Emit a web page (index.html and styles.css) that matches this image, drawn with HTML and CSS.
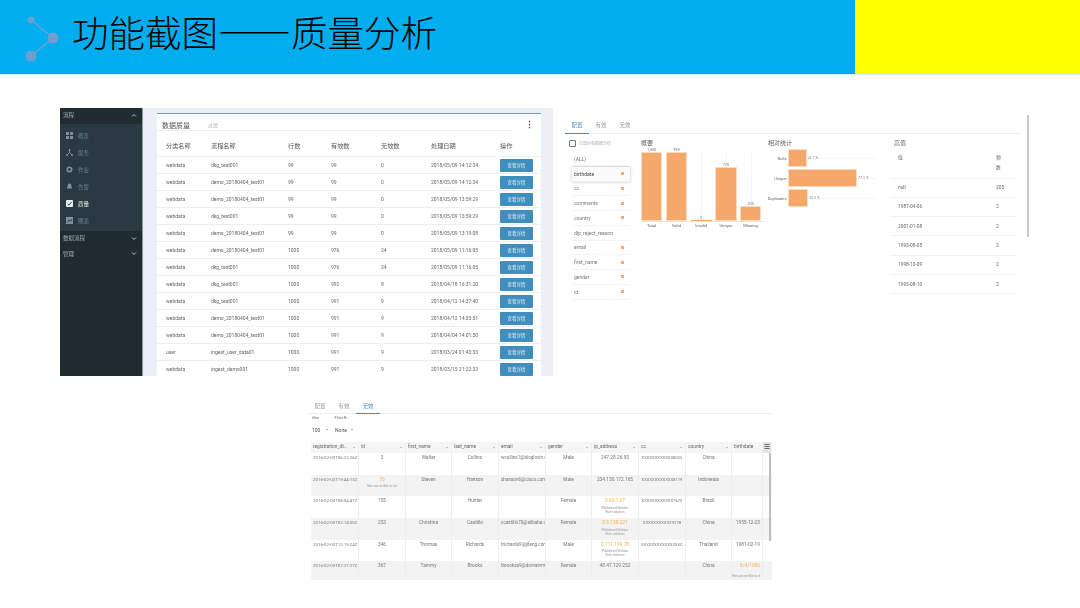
FILE: index.html

```html
<!DOCTYPE html>
<html lang="zh-CN">
<head>
  <meta charset="UTF-8" />
  <title>功能截图——质量分析</title>
  <link rel="stylesheet" href="styles.css">
</head>
<body>
  <div class="slide">
    <header class="banner">
      <div class="banner-main">
        <svg class="banner-logo" width="44" height="50" viewBox="0 0 44 50">
          <path d="M9 4 L31 22 L9 40" fill="none" stroke="#6f9fd0" stroke-width="1.6"/>
          <circle cx="9" cy="4" r="3.5" fill="#6f9fd0"/>
          <circle cx="31" cy="22" r="5.5" fill="#6f9fd0"/>
          <circle cx="9" cy="40" r="5.5" fill="#6f9fd0"/>
        </svg>
        <h1>功能截图——质量分析</h1>
      </div>
      <div class="banner-accent"></div>
    </header>

    <div class="shots-top">
      <section class="shot dq">
        <nav class="side">
          <div class="side-head">流程<svg width="6" height="5" viewBox="0 0 6 5"><path d="M1 3.5L3 1.5L5 3.5" fill="none" stroke="#b4c0c4"/></svg></div>
          <div class="side-items">
            <div class="side-item"><svg width="7" height="7" viewBox="0 0 7 7"><path d="M0 0h3v3H0zM4 0h3v3H4zM0 4h3v3H0zM4 4h3v3H4z" fill="#7f9097"/></svg>概览</div>
            <div class="side-item"><svg width="7" height="7" viewBox="0 0 7 7"><path d="M3.5 0.5v3M3.5 3.5L1 6M3.5 3.5L6 6" stroke="#7f9097" fill="none"/><circle cx="3.5" cy="1" r="1" fill="#7f9097"/><circle cx="1" cy="6" r="1" fill="#7f9097"/><circle cx="6" cy="6" r="1" fill="#7f9097"/></svg>服务</div>
            <div class="side-item"><svg width="7" height="7" viewBox="0 0 7 7"><circle cx="3.5" cy="3.5" r="2.2" fill="none" stroke="#7f9097" stroke-width="1.6"/></svg>作业</div>
            <div class="side-item"><svg width="7" height="7" viewBox="0 0 7 7"><path d="M3.5 0.5C2 0.5 1.5 2 1.5 3.5L0.8 5.5H6.2L5.5 3.5C5.5 2 5 0.5 3.5 0.5z" fill="#7f9097"/></svg>告警</div>
            <div class="side-item side-item-on"><svg width="7" height="7" viewBox="0 0 7 7"><rect width="7" height="7" rx="1" fill="#e8edef"/><path d="M1.5 4L3 5.2L5.5 2" stroke="#33454d" fill="none"/></svg>质量</div>
            <div class="side-item"><svg width="7" height="7" viewBox="0 0 7 7"><rect width="7" height="7" fill="#7f9097"/><path d="M1 5.5L3 3L4.5 4.5L6 2" stroke="#2b3a42" fill="none"/></svg>图表</div>
          </div>
          <div class="side-head">数据流程<svg width="6" height="5" viewBox="0 0 6 5"><path d="M1 1.5L3 3.5L5 1.5" fill="none" stroke="#b4c0c4"/></svg></div>
          <div class="side-head">管理<svg width="6" height="5" viewBox="0 0 6 5"><path d="M1 1.5L3 3.5L5 1.5" fill="none" stroke="#b4c0c4"/></svg></div>
        </nav>
        <div class="dq-main">
          <div class="card">
            <div class="card-top">
              <span class="card-title">数据质量</span>
              <span class="card-filter">过滤</span>
              <span class="kebab">⋮</span>
            </div>
            <div class="dq-row dq-head"><span>分类名称</span><span>流程名称</span><span>行数</span><span>有效数</span><span>无效数</span><span>处理日期</span><span>操作</span></div>
            <div class="dq-row"><span>webdata</span><span>dkg_test001</span><span>99</span><span>99</span><span>0</span><span>2018/05/09 14:12:34</span><button>查看详情</button></div>
            <div class="dq-row"><span>webdata</span><span>demo_20180404_test01</span><span>99</span><span>99</span><span>0</span><span>2018/05/09 14:12:34</span><button>查看详情</button></div>
            <div class="dq-row"><span>webdata</span><span>demo_20180404_test01</span><span>99</span><span>99</span><span>0</span><span>2018/05/09 13:59:29</span><button>查看详情</button></div>
            <div class="dq-row"><span>webdata</span><span>dkg_test001</span><span>99</span><span>99</span><span>0</span><span>2018/05/09 13:59:29</span><button>查看详情</button></div>
            <div class="dq-row"><span>webdata</span><span>demo_20180404_test01</span><span>99</span><span>99</span><span>0</span><span>2018/05/09 13:19:08</span><button>查看详情</button></div>
            <div class="dq-row"><span>webdata</span><span>demo_20180404_test01</span><span>1000</span><span>976</span><span>24</span><span>2018/05/09 11:16:05</span><button>查看详情</button></div>
            <div class="dq-row"><span>webdata</span><span>dkg_test001</span><span>1000</span><span>976</span><span>24</span><span>2018/05/09 11:16:05</span><button>查看详情</button></div>
            <div class="dq-row"><span>webdata</span><span>dkg_test001</span><span>1000</span><span>992</span><span>8</span><span>2018/04/18 16:31:20</span><button>查看详情</button></div>
            <div class="dq-row"><span>webdata</span><span>dkg_test001</span><span>1000</span><span>991</span><span>9</span><span>2018/04/12 14:37:40</span><button>查看详情</button></div>
            <div class="dq-row"><span>webdata</span><span>demo_20180404_test01</span><span>1000</span><span>991</span><span>9</span><span>2018/04/12 14:33:51</span><button>查看详情</button></div>
            <div class="dq-row"><span>webdata</span><span>demo_20180404_test01</span><span>1000</span><span>991</span><span>9</span><span>2018/04/04 14:01:50</span><button>查看详情</button></div>
            <div class="dq-row"><span>user</span><span>ingest_user_data01</span><span>1000</span><span>991</span><span>9</span><span>2018/03/24 01:43:33</span><button>查看详情</button></div>
            <div class="dq-row"><span>webdata</span><span>ingest_demo001</span><span>1000</span><span>991</span><span>9</span><span>2018/03/15 21:22:33</span><button>查看详情</button></div>
          </div>
        </div>
      </section>

      <section class="shot profile">
        <div class="tabs">
          <span class="tab tab-on">配置</span><span class="tab">有效</span><span class="tab">无效</span>
        </div>
        <div class="profile-body">
          <div class="fields">
            <div class="only-bad"><i class="checkbox"></i>只显示有数据分析</div>
            <div class="field">(ALL)</div>
            <div class="field field-on">birthdate<i class="dot"></i></div>
            <div class="field">cc<i class="dot"></i></div>
            <div class="field">comments<i class="dot"></i></div>
            <div class="field">country<i class="dot"></i></div>
            <div class="field">dlp_reject_reason</div>
            <div class="field">email<i class="dot"></i></div>
            <div class="field">first_name<i class="dot"></i></div>
            <div class="field">gender<i class="dot"></i></div>
            <div class="field">id<i class="dot"></i></div>
          </div>

          <div class="overview">
            <div class="sub-title">概要</div>
            <div class="plot">
              <div class="col"><span>1,000</span><i class="bar bar-full"></i></div>
              <div class="col"><span>998</span><i class="bar bar-full"></i></div>
              <div class="col"><span>2</span><i class="bar bar-tiny"></i></div>
              <div class="col"><span>770</span><i class="bar bar-unique"></i></div>
              <div class="col"><span>205</span><i class="bar bar-missing"></i></div>
            </div>
            <div class="plot-labels"><span>Total</span><span>Valid</span><span>Invalid</span><span>Unique</span><span>Missing</span></div>
          </div>

          <div class="relative">
            <div class="sub-title">相对统计</div>
            <div class="rel-row"><span class="rel-name">Nulls</span><div class="rel-track"><i class="hbar hbar-nulls"></i><span class="rel-pct">26.7 %</span></div></div>
            <div class="rel-row"><span class="rel-name">Unique</span><div class="rel-track"><i class="hbar hbar-unique"></i><span class="rel-pct">77.3 %</span></div></div>
            <div class="rel-row"><span class="rel-name">Duplicates</span><div class="rel-track"><i class="hbar hbar-dup"></i><span class="rel-pct">33.3 %</span></div></div>
          </div>

          <div class="freq">
            <div class="sub-title freq-title">高值</div>
            <div class="freq-row freq-head"><span>值</span><span>频<br>数</span></div>
            <div class="freq-row"><span>null</span><span>205</span></div>
            <div class="freq-row"><span>1987-04-06</span><span>2</span></div>
            <div class="freq-row"><span>2001-01-08</span><span>2</span></div>
            <div class="freq-row"><span>1993-08-05</span><span>2</span></div>
            <div class="freq-row"><span>1998-10-09</span><span>2</span></div>
            <div class="freq-row"><span>1993-08-10</span><span>2</span></div>
          </div>
        </div>
        <div class="thumb"></div>
      </section>
    </div>

    <section class="shot invalid">
      <div class="tabs">
        <span class="tab">配置</span><span class="tab">有效</span><span class="tab tab-on">无效</span>
      </div>
      <div class="dt-filters"><span>filter</span><span>Filter R...</span></div>
      <div class="dt-selects"><span>100</span><i class="caret"></i><span>None</span><i class="caret"></i></div>
      <div class="dt">
        <div class="dt-row dt-head">
          <span>registration_dt...</span><span>id</span><span>first_name</span><span>last_name</span><span>email</span><span>gender</span><span>ip_address</span><span>cc</span><span>country</span><span class="no-sort">birthdate</span><span class="dt-menu">≡</span>
        </div>
        <div class="dt-row">
          <span class="left">2016-02-03T06:22:26Z</span><span>2</span><span>Walter</span><span>Collins</span><span class="left">wcollins1@bloglovin.c</span><span>Male</span><span>247.28.26.93</span><span>XXXXXXXXXXXX8025</span><span>China</span><span></span><span></span>
        </div>
        <div class="dt-row dt-even">
          <span class="left">2016-02-03T19:44:13Z</span><span><b>7b</b><small>Not convertible to int</small></span><span>Steven</span><span>Hanson</span><span class="left">shanson6@cisco.com</span><span>Male</span><span>234.130.172.165</span><span>XXXXXXXXXXXX8119</span><span>Indonesia</span><span></span><span></span>
        </div>
        <div class="dt-row">
          <span class="left">2016-02-03T08:04:47Z</span><span>155</span><span></span><span>Hunter</span><span></span><span>Female</span><span><b>0.62.1.27</b><small>IPAddressValidator<br>Rule violation</small></span><span>XXXXXXXXXXXX7675</span><span>Brazil</span><span></span><span></span>
        </div>
        <div class="dt-row dt-even">
          <span class="left">2016-02-03T02:14:50Z</span><span>253</span><span>Christina</span><span>Castillo</span><span class="left">ccastillo70@alibaba.c</span><span>Female</span><span><b>0.9.138.221</b><small>IPAddressValidator<br>Rule violation</small></span><span>XXXXXXXXXXX9278</span><span>China</span><span class="right">1955-12-23</span><span></span>
        </div>
        <div class="dt-row">
          <span class="left">2016-02-03T12:19:24Z</span><span>346</span><span>Thomas</span><span>Richards</span><span class="left">trichards9@jifeng.com</span><span>Male</span><span><b>0.111.199.78</b><small>IPAddressValidator<br>Rule violation</small></span><span>XXXXXXXXXXXXXXUC</span><span>Thailand</span><span class="right">1981-02-19</span><span></span>
        </div>
        <div class="dt-row dt-even">
          <span class="left">2016-02-03T07:27:27Z</span><span>367</span><span>Tammy</span><span>Brooks</span><span class="left">tbrooksa9@domainm</span><span>Female</span><span>48.47.129.252</span><span></span><span>China</span><span class="right"><b>5/4/1986</b><small class="small-low">Not convertible to d</small></span><span></span>
        </div>
        <div class="dt-scroll"></div>
      </div>
    </section>
  </div>
</body>
</html>
```

FILE: styles.css

```css
* {
  box-sizing: border-box;
}
html, body {
  margin: 0;
  padding: 0;
  background: #ffffff;
}
.slide {
  width: 1080px;
  height: 608px;
  overflow: hidden;
  background: #ffffff;
  font-family: Roboto, "Noto Sans CJK SC", sans-serif;
}

/* banner */
.banner {
  display: flex;
  height: 74px;
  box-shadow: 0 1px 0 #cdeefb;
}
.banner-main {
  flex: 1;
  display: flex;
  align-items: center;
  padding-left: 22px;
  background: #00aeef;
}
.banner-logo {
  flex: none;
  margin-top: 8px;
}
.banner-main h1 {
  margin: 0 0 10px 6px;
  font-family: "Noto Sans CJK SC", sans-serif;
  font-size: 36.5px;
  font-weight: 300;
  line-height: 1;
  color: #000000;
  white-space: nowrap;
}
.banner-accent {
  width: 225px;
  background: #ffff00;
}

/* pasted screenshots */
.shot {
  overflow: hidden;
  background: #ffffff;
  filter: blur(0.6px);
}
.shots-top {
  display: flex;
  gap: 12px;
  margin-top: 34px;
  padding-left: 60px;
}

/* first shot: quality list */
.dq {
  display: flex;
  width: 493px;
  height: 268px;
  background: #eceff5;
}
.side {
  width: 83px;
  flex: none;
  background: #212c31;
  font-size: 5.5px;
  color: #a4b1b6;
  border-right: 1px solid #8b9598;
}
.side-head {
  display: flex;
  justify-content: space-between;
  align-items: center;
  height: 15.5px;
  padding: 0 5px 1px 3px;
}
.side-items {
  height: 107.5px;
  padding-top: 3.5px;
  background: #2b3a42;
}
.side-item {
  display: flex;
  align-items: center;
  gap: 5px;
  height: 17px;
  padding-left: 6px;
  color: #6f8087;
}
.side-item-on {
  color: #eef2f3;
}
.dq-main {
  flex: 1;
  padding: 5px 12px 0 14px;
}
.card {
  height: 263px;
  background: #ffffff;
  border-top: 1px solid #6b9cc0;
  overflow: hidden;
}
.card-top {
  display: flex;
  align-items: center;
  height: 17px;
  margin-right: 29px;
  padding: 5px 0 0 5px;
  border-bottom: 1px solid #eef0f2;
  position: relative;
}
.card-title {
  width: 46px;
  font-size: 7px;
  color: #555;
}
.card-filter {
  font-size: 5px;
  color: #aaa;
}
.kebab {
  position: absolute;
  right: -22px;
  top: 7px;
  font-size: 9px;
  line-height: 9px;
  font-weight: 700;
  color: #555;
}
.dq-row {
  display: grid;
  grid-template-columns: 45px 77px 43px 50px 50px 69px 33px;
  align-items: center;
  height: 17px;
  padding-left: 9px;
  font-size: 5px;
  color: #666;
  border-bottom: 1.5px solid #eceef3;
  white-space: nowrap;
}
.dq-head {
  height: 26px;
  padding-top: 4px;
  font-size: 6.2px;
  color: #555;
  border-bottom: 1px solid #eef0f2;
}
.dq-row button {
  width: 33px;
  height: 13px;
  padding: 0;
  border: 0;
  border-radius: 1px;
  background: #3f8ebd;
  color: #d8ebf5;
  font: 4.5px "Noto Sans CJK SC", sans-serif;
}

/* shared tabs */
.tabs {
  display: flex;
  height: 14px;
  border-bottom: 1px solid #f0f0f0;
}
.tab {
  width: 24px;
  height: 14px;
  text-align: center;
  font-size: 5.5px;
  line-height: 12px;
  color: #999;
}
.tab-on {
  color: #4a8fc0;
  border-bottom: 1px solid #3f8ebd;
}

/* second shot: field profile */
.profile {
  position: relative;
  width: 465px;
  height: 200px;
  padding-top: 11px;
}
.profile .tabs {
  width: 457px;
  height: 15px;
}
.profile .tab {
  height: 15px;
}
.profile-body {
  display: grid;
  grid-template-columns: 76px 127px 122px 127px;
}
.fields {
  padding-left: 7px;
  font-size: 5px;
  color: #777;
}
.only-bad {
  display: flex;
  align-items: center;
  gap: 3px;
  height: 18px;
  margin-left: -3px;
  font-size: 4px;
  color: #aaa;
}
.checkbox {
  width: 7px;
  height: 7px;
  border: 1px solid #777;
  border-radius: 1px;
}
.field {
  display: flex;
  justify-content: space-between;
  align-items: center;
  width: 58px;
  height: 14.75px;
  padding: 0 6px 0 2px;
  border-bottom: 1px solid #f3f3f3;
}
.field-on {
  color: #444;
  background: #fafafa;
  box-shadow: 0 0 3px rgba(0, 0, 0, 0.25);
}
.dot {
  width: 3px;
  height: 3px;
  background: #f4a96a;
}
.sub-title {
  height: 8px;
  margin-top: 5px;
  font-size: 6px;
  line-height: 8px;
  color: #666;
}
.plot {
  display: flex;
  align-items: stretch;
  width: 124px;
  height: 75px;
  border-bottom: 1px solid #f6e3d2;
}
.col {
  display: flex;
  flex-direction: column;
  justify-content: flex-end;
  width: 24.75px;
  padding-right: 3.5px;
  font-size: 3.8px;
  text-align: center;
  color: #777;
  background: linear-gradient(#f2f2f2, #f2f2f2) 10.5px 5px / 1px 70px no-repeat;
}
.col span {
  height: 5px;
  line-height: 5px;
}
.bar {
  display: block;
  background: #f4a96a;
  border: 1px solid #fbdcc2;
}
.bar-full {
  height: 70px;
}
.bar-tiny {
  height: 1px;
  border: 0;
}
.bar-unique {
  height: 54px;
}
.bar-missing {
  height: 15px;
}
.plot-labels {
  display: flex;
  width: 124px;
  height: 8px;
  font-size: 4.2px;
  line-height: 8px;
  color: #666;
}
.plot-labels span {
  width: 24.75px;
  padding-right: 3.5px;
  text-align: center;
}
.rel-row {
  display: grid;
  grid-template-columns: 20px 87px;
  align-items: center;
  height: 20px;
  font-size: 4px;
  color: #666;
}
.relative .sub-title {
  margin-bottom: 1px;
}
.rel-name {
  margin-left: -6px;
  width: 26px;
  padding-right: 1.5px;
  text-align: right;
}
.rel-track {
  display: flex;
  align-items: center;
  height: 18px;
  background: linear-gradient(#f2f2f2, #f2f2f2) 0 50% / 100% 1px no-repeat;
}
.hbar {
  display: block;
  height: 18px;
  background: #f4a96a;
  border: 1px solid #fbdcc2;
}
.hbar-nulls {
  width: 18.5px;
}
.hbar-unique {
  width: 69px;
}
.hbar-dup {
  width: 20px;
}
.rel-pct {
  padding: 0 1px;
  font-size: 3.6px;
  color: #888;
  background: #ffffff;
}
.freq {
  font-size: 4.8px;
  color: #666;
}
.freq-title {
  padding-left: 4px;
}
.freq-row {
  display: grid;
  grid-template-columns: 98px 1fr;
  align-items: center;
  height: 19.3px;
  padding-left: 8px;
  border-bottom: 1px solid #f2f2f2;
}
.freq-head {
  align-items: start;
  height: 31.5px;
  padding-top: 6px;
  line-height: 10px;
}
.thumb {
  position: absolute;
  left: 462px;
  top: 7px;
  width: 2px;
  height: 122px;
  background: #c8c8c8;
}

/* third shot: invalid rows */
.invalid {
  width: 464px;
  height: 180px;
  margin: 24px 0 0 308px;
}
.dt-filters {
  display: flex;
  gap: 15px;
  height: 8px;
  padding-left: 4px;
  font-size: 3.8px;
  line-height: 7px;
  color: #666;
}
.dt-selects {
  display: flex;
  align-items: center;
  gap: 4px;
  height: 13px;
  padding: 2px 0 0 4px;
  font-size: 5px;
  color: #555;
}
.dt-selects span:first-child {
  width: 10px;
}
.dt-selects .caret + span {
  margin-left: 3px;
}
.caret {
  width: 0;
  height: 0;
  border-left: 1.5px solid transparent;
  border-right: 1.5px solid transparent;
  border-top: 1.5px solid #666;
}
.dt {
  position: relative;
  margin: 7px 0 0 3px;
}
.dt-row {
  display: grid;
  grid-template-columns: 47px 47px 46px 47px 47px 46px 47px 47px 46px 31px 9px;
  height: 21.7px;
  font-size: 4.8px;
  color: #777;
  white-space: nowrap;
}
.dt-row > span {
  overflow: hidden;
  padding-top: 2px;
  text-align: center;
  border-left: 1px solid #eeeeee;
}
.dt-row > span:first-child {
  border-left: 0;
  font-size: 4.4px;
}
.dt-row > span:nth-child(5) {
  font-size: 4.6px;
}
.dt-row > span:nth-child(8) {
  font-size: 4.2px;
}
.dt-row .left {
  padding-left: 2px;
  text-align: left;
}
.dt-row .right {
  padding-right: 2px;
  text-align: right;
}
.dt-even {
  background: #f3f3f3;
}
.dt-row b {
  display: block;
  font-weight: 400;
  color: #f6b24e;
}
.dt-row small {
  display: block;
  margin-top: 2.5px;
  font-size: 3.2px;
  line-height: 4px;
  color: #999;
}
.dt-row .small-low {
  margin-top: 6px;
  text-align: right;
}
.dt-head {
  height: 11px;
  background: #f5f5f5;
  color: #666;
}
.dt-head > span,
.dt-head > span:first-child,
.dt-head > span:nth-child(5),
.dt-head > span:nth-child(8) {
  display: flex;
  justify-content: space-between;
  padding: 1.5px 3px 0 2px;
  font-size: 4.8px;
  text-align: left;
}
.dt-head > span::after {
  content: "";
  width: 0;
  height: 0;
  margin-top: 3px;
  border-left: 1.2px solid transparent;
  border-right: 1.2px solid transparent;
  border-top: 1.2px solid #888;
}
.dt-head > .no-sort::after {
  display: none;
}
.dt-head .dt-menu {
  display: block;
  padding: 2px 0 0 0;
  text-align: center;
  font-size: 7px;
  line-height: 7px;
  font-weight: 700;
  background: #e4e4e4;
  color: #444;
}
.dt-head .dt-menu::after {
  display: none;
}
.dt-scroll {
  position: absolute;
  right: 1px;
  top: 11px;
  width: 2px;
  height: 88px;
  background: #bdbdbd;
}
```
